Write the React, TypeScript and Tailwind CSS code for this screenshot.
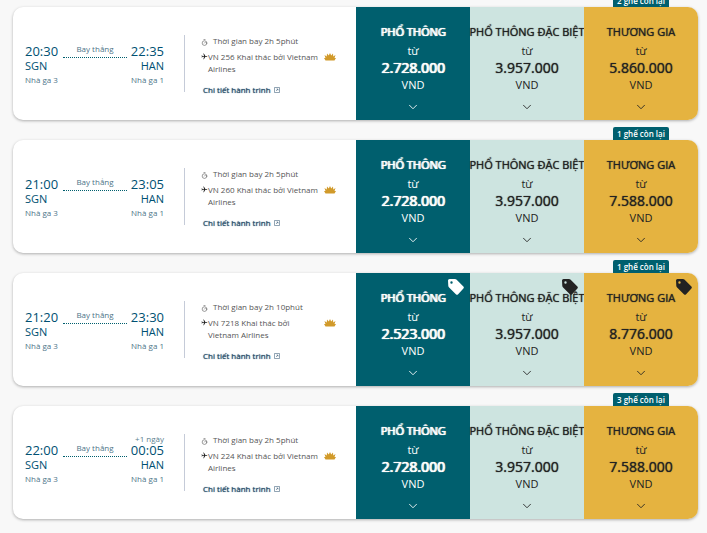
import React, { useState } from 'react';
import { MdFlight } from 'react-icons/md';
import { ChevronDown, Timer } from 'lucide-react';

type Fare = {
  name: string;
  price: string;
};

type Flight = {
  code: string;
  depart: string;
  arrive: string;
  nextDay?: boolean;
  duration: string;
  seatsLeft: number;
  promo?: boolean;
  fares: Fare[];
};

const makeFares = (economy: string, premium: string, business: string): Fare[] => [
  { name: 'PHỔ THÔNG', price: economy },
  { name: 'PHỔ THÔNG ĐẶC BIỆT', price: premium },
  { name: 'THƯƠNG GIA', price: business }
];

const flights: Flight[] = [
  { code: 'VN 256', depart: '20:30', arrive: '22:35', duration: '2h 5phút', seatsLeft: 2, fares: makeFares('2.728.000', '3.957.000', '5.860.000') },
  { code: 'VN 260', depart: '21:00', arrive: '23:05', duration: '2h 5phút', seatsLeft: 1, fares: makeFares('2.728.000', '3.957.000', '7.588.000') },
  { code: 'VN 7218', depart: '21:20', arrive: '23:30', duration: '2h 10phút', seatsLeft: 1, promo: true, fares: makeFares('2.523.000', '3.957.000', '8.776.000') },
  { code: 'VN 224', depart: '22:00', arrive: '00:05', nextDay: true, duration: '2h 5phút', seatsLeft: 3, fares: makeFares('2.728.000', '3.957.000', '7.588.000') }
];

const fareStyles = [
  'bg-[#005f6e] text-white',
  'bg-[#cde4e0] text-[#222]',
  'bg-[#e5b340] text-[#222] rounded-r-[10px]'
];

// the economy column is set heavier than the other two
const fareEmphasis = [
  '[text-shadow:0_0_1px_currentColor,1px_0_0_currentColor]',
  '[text-shadow:0_0_1px_currentColor]',
  '[text-shadow:0_0_1px_currentColor]'
];

const Lotus = () => (
  <svg viewBox="0 0 24 16" className="h-2 w-3 shrink-0 fill-[#d19a2a]" role="img" aria-label="Vietnam Airlines">
    <path d="M12 0l2.500 5L18 1l.5 6L23 4l-2 6h3l-3 5H3l-3-5h3L1 4l4.500 3L6 1l3.500 4z" />
  </svg>
);

const TagIcon = () => (
  <svg viewBox="0 0 16 16" className="absolute top-1.5 right-1.5 size-4 fill-current" aria-hidden="true">
    <path fillRule="evenodd" d="M1.500 0H7q.8 0 1.400.6l7 7q.9.9 0 1.800l-5.500 6q-.9.9-1.800 0l-7-7Q.4 7.800.3 7L0 1.500Q0 0 1.500 0zM3.500 2.300a1.200 1.200 0 1 0 0 2.400 1.200 1.200 0 0 0 0-2.400z" />
  </svg>
);

const DetailsIcon = () => (
  <svg viewBox="0 0 12 12" className="size-1.5 fill-none stroke-current" aria-hidden="true">
    <path strokeWidth="1" d="M1 1h10v10H1zM4 8l4-4M5 4h3v3" />
  </svg>
);

const Airport = ({ time, code, terminal, note }: { time: string; code: string; terminal: string; note?: string }) => (
  <>
    <div className="h-[9px] text-[8px] leading-[9px] text-[#5b7f90]">{note}</div>
    <div className="text-[13px] leading-[14px]">{time}</div>
    <div className="text-[11px] leading-4">{code}</div>
    <div className="text-[8px] leading-[11px] text-[#4d7488]">{terminal}</div>
  </>
);

const FlightCard = ({ flight }: { flight: Flight }) => {
  const [selected, setSelected] = useState<string | null>(null);

  return (
    <article className="flex rounded-[10px] bg-white shadow-[0_1px_3px_rgba(0,0,0,0.3)]">
      <div className="flex min-w-0 flex-1 items-start pt-7 pb-6 pl-3">
        <div className="flex h-[57px] shrink-0 border-r border-[#c5cbd8] pr-5 text-[#005072]">
          <div className="w-[38px]">
            <Airport time={flight.depart} code="SGN" terminal="Nhà ga 3" />
          </div>
          <div className="mt-2 h-[15px] w-16 border-b border-dotted border-[#005f6e] text-center text-[8px] leading-3 text-[#4d7488]">
            Bay thẳng
          </div>
          <div className="flex w-[37px] flex-col items-end whitespace-nowrap">
            <Airport time={flight.arrive} code="HAN" terminal="Nhà ga 1" note={flight.nextDay ? '+1 ngày' : undefined} />
          </div>
        </div>

        <div className="min-w-0 flex-1 pr-5 pl-4 text-[8px] leading-3 text-[#555]">
          <div className="flex items-center">
            <Timer size={7} className="mt-0.5" />
            <span className="ml-[5px]">{`Thời gian bay ${flight.duration}`}</span>
          </div>
          <div className="mt-1 flex items-start">
            <MdFlight size={7} className="mt-0.5 shrink-0 rotate-90 text-[#222]" />
            <p className="flex-1">{`${flight.code} Khai thác bởi Vietnam Airlines`}</p>
            <div className="mt-0.5 ml-1">
              <Lotus />
            </div>
          </div>
          <a href="#details" className="mt-[9px] ml-0.5 flex items-center gap-[3px] font-medium text-[#244b68] [text-shadow:0_0_1px_currentColor]">
            Chi tiết hành trình
            <DetailsIcon />
          </a>
        </div>
      </div>

      {flight.fares.map((fare, i) => (
        <button
          key={fare.name}
          type="button"
          aria-pressed={selected === fare.name}
          onClick={() => setSelected(fare.name)}
          className={`relative flex w-[114px] shrink-0 flex-col items-center pt-[17px] whitespace-nowrap ${fareStyles[i]}`}
        >
          {i === 2 && (
            <span className="absolute -top-[13px] rounded-t-xs bg-[#005f6e] px-1 text-[8px] leading-[13px] font-semibold text-white">
              {`${flight.seatsLeft} ghế còn lại`}
            </span>
          )}
          {flight.promo && <TagIcon />}
          <span className={`text-[11px] leading-[15px] ${fareEmphasis[i]}`}>{fare.name}</span>
          <span className="mt-1 text-[11px] leading-[15px]">từ</span>
          <span className={`text-[14px] leading-5 ${fareEmphasis[i]}`}>{fare.price}</span>
          <span className="text-[11px] leading-[14px]">VND</span>
          <ChevronDown size={14} strokeWidth={1.5} className="mt-2" />
        </button>
      ))}
    </article>
  );
};

const App = () => {
  return (
    <main className="flex min-h-screen flex-col gap-5 bg-[#f8f8f8] pt-[7px] pr-[9px] pb-3 pl-[13px] font-['Open_Sans',sans-serif]">
      {flights.map(flight => (
        <FlightCard key={flight.code} flight={flight} />
      ))}
    </main>
  );
};

export default App;
